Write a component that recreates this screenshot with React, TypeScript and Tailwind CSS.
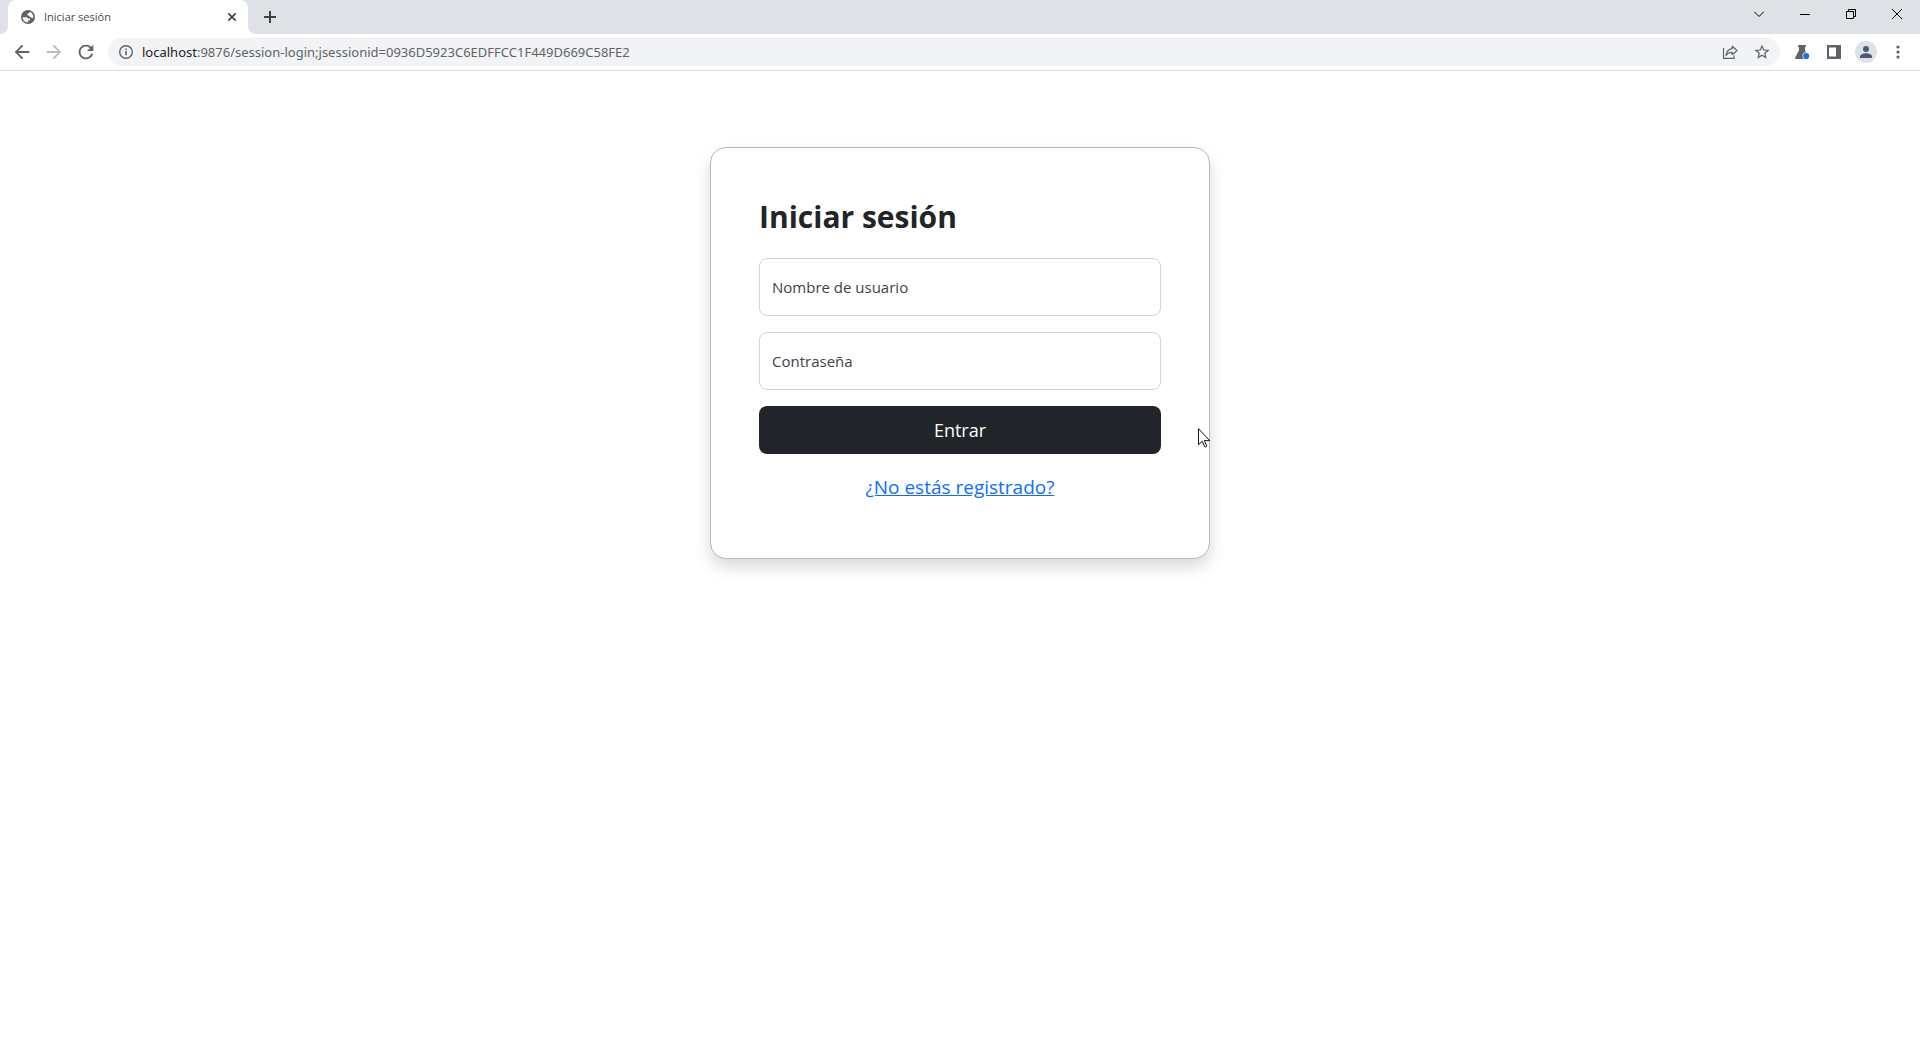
import type { ReactNode } from "react";

type IconButtonProps = { label: string; className?: string; children: ReactNode };

function IconButton({ label, className = "w-8", children }: IconButtonProps) {
  return (
    <button type="button" aria-label={label} className={`flex h-7 shrink-0 items-center justify-center ${className}`}>
      {children}
    </button>
  );
}

function TabStrip() {
  return (
    <header className="flex h-[34px] items-stretch bg-[#dee1e6]">
      <svg className="h-2 w-2 self-end" viewBox="0 0 8 8" aria-hidden="true">
        <path d="M8 0v8H0a8 8 0 0 0 8-8z" fill="#fff" />
      </svg>
      <div className="flex w-60 items-center rounded-t-lg bg-white pl-[13px] pr-2">
        <svg className="h-[14px] w-[14px] shrink-0" viewBox="0 0 14 14" aria-hidden="true">
          <circle cx="7" cy="7" r="7" fill="#5f6368" />
          <path
            d="M1.600 7.200h3.200c1 0 1.700.5 2 1.400h1.400c.7 0 .9.5.7 1.100-.2.7-.8.9-1.600.9-.4 0-.5.4-.5 1.800C4 12.400 1.700 10.200 1.600 7.200z"
            fill="#fff"
          />
          <path
            d="M8.700 1.800c.1.900-.3 1.300-1.100 1.400-.9.1-1.300.6-1.300 1.300s.5 1 1.300 1c.7 0 .9.700 1.200 1.200.4.600 1 .3 1.500.7.500.5.900 1 2 .600C12.800 5.400 11.300 2.700 8.700 1.800z"
            fill="#fff"
          />
        </svg>
        <span className="ml-[9px] grow font-['Open_Sans','Noto_Sans',sans-serif] text-[11px] text-[#45494d]">Iniciar sesión</span>
        <button type="button" aria-label="Cerrar pestaña" className="flex h-4 w-4 items-center justify-center">
          <svg className="h-2 w-2" viewBox="0 0 8 8" stroke="#3c4043" strokeWidth="1.6" aria-hidden="true">
            <path d="M.3.3l7.400 7.400M7.700.3L.3 7.700" />
          </svg>
        </button>
      </div>
      <svg className="h-2 w-2 self-end" viewBox="0 0 8 8" aria-hidden="true">
        <path d="M0 0v8h8a8 8 0 0 1-8-8z" fill="#fff" />
      </svg>
      <button type="button" aria-label="Nueva pestaña" className="flex w-7 items-center justify-center">
        <svg className="h-3 w-3" viewBox="0 0 12 12" stroke="#3c4043" strokeWidth="2" aria-hidden="true">
          <path d="M6 0v12M0 6h12" />
        </svg>
      </button>
      <div className="ml-auto flex h-7 text-black">
        <IconButton label="Buscar pestañas" className="w-[46px]">
          <svg className="h-[10px] w-[10px]" viewBox="0 0 10 10" fill="none" stroke="currentColor" aria-hidden="true">
            <path d="M0 2.500l5 5 5-5" />
          </svg>
        </IconButton>
        <IconButton label="Minimizar" className="w-[46px]">
          <svg className="h-[10px] w-[10px]" viewBox="0 0 10 10" fill="none" stroke="currentColor" aria-hidden="true">
            <path d="M0 5.500h10" />
          </svg>
        </IconButton>
        <IconButton label="Restaurar" className="w-[46px]">
          <svg className="h-[10px] w-[10px]" viewBox="0 0 10 10" fill="none" stroke="currentColor" aria-hidden="true">
            <path d="M.5 2.500h7v7h-7zM2.500 2.500v-2h7v7h-2" />
          </svg>
        </IconButton>
        <IconButton label="Cerrar" className="w-[46px]">
          <svg className="h-[10px] w-[10px]" viewBox="0 0 10 10" fill="none" stroke="currentColor" aria-hidden="true">
            <path d="M0 0l10 10M10 0L0 10" />
          </svg>
        </IconButton>
      </div>
    </header>
  );
}

function Toolbar() {
  return (
    <nav aria-label="Navegador" className="flex h-[37px] items-center border-b border-[#dadce0] bg-white px-[6px] text-[#5f6368]">
      <IconButton label="Atrás">
        <svg className="h-[22px] w-[22px]" viewBox="0 0 24 24" fill="currentColor" aria-hidden="true">
          <path d="M20 11H7.830l5.590-5.590L12 4l-8 8 8 8 1.410-1.410L7.830 13H20v-2z" />
        </svg>
      </IconButton>
      <IconButton label="Adelante">
        <svg className="h-[22px] w-[22px] text-[#babcbe]" viewBox="0 0 24 24" fill="currentColor" aria-hidden="true">
          <path d="M12 4l-1.410 1.410L16.170 11H4v2h12.170l-5.580 5.590L12 20l8-8z" />
        </svg>
      </IconButton>
      <IconButton label="Recargar">
        <svg className="h-[22px] w-[22px]" viewBox="0 0 24 24" fill="currentColor" aria-hidden="true">
          <path d="M17.650 6.350C16.200 4.900 14.210 4 12 4c-4.420 0-7.990 3.580-7.990 8s3.570 8 7.990 8c3.730 0 6.840-2.550 7.730-6h-2.080c-.82 2.330-3.040 4-5.650 4-3.310 0-6-2.690-6-6s2.690-6 6-6c1.660 0 3.140.69 4.220 1.780L13 11h7V4l-2.350 2.350z" />
        </svg>
      </IconButton>
      <div className="ml-[6px] flex h-7 grow items-center rounded-full bg-[#f1f3f4] pl-[10px] pr-[2px]">
        <svg className="h-4 w-4 shrink-0" viewBox="0 0 16 16" fill="none" stroke="currentColor" strokeWidth="1.400" aria-hidden="true">
          <circle cx="8" cy="8" r="6.300" />
          <path d="M8 7v4.300M8 4.500V6" strokeWidth="1.600" />
        </svg>
        <a href="#inicio" className="ml-2 grow whitespace-nowrap font-['Noto_Sans','Open_Sans',sans-serif] text-[13px] leading-5">
          <span className="text-[#202124]">localhost</span>:9876/session-login;jsessionid=0936D5923C6EDFFCC1F449D669C58FE2
        </a>
        <IconButton label="Compartir">
          <svg className="h-4 w-4" viewBox="0 0 16 16" fill="none" stroke="currentColor" strokeWidth="1.200" aria-hidden="true">
            <path d="M1.500 4v10.400h10.500V11.500" />
            <path d="M10.200 2.300L15 6.500l-4.800 4.200V8.300C7.300 8.200 5.300 9.200 4 11.500c.4-3.700 2.500-6.300 6.200-6.800z" strokeLinejoin="round" />
          </svg>
        </IconButton>
        <IconButton label="Añadir a marcadores">
          <svg className="h-4 w-4" viewBox="1.500 1.500 21 21" fill="currentColor" aria-hidden="true">
            <path d="M22 9.240l-7.190-.62L12 2 9.190 8.630 2 9.240l5.460 4.730L5.820 21 12 17.270 18.180 21l-1.630-7.030L22 9.240zM12 15.400l-3.760 2.270 1-4.280-3.320-2.880 4.380-.38L12 6.100l1.710 4.040 4.380.38-3.320 2.880 1 4.280L12 15.400z" />
          </svg>
        </IconButton>
      </div>
      <IconButton label="Experimentos" className="ml-[6px] w-8">
        <svg className="h-4 w-4" viewBox="0 0 16 16" aria-hidden="true">
          <path d="M4 1h8v1.700h-1v3.600l3.800 7.200c.4.800 0 1.500-.9 1.500H2.100c-.9 0-1.300-.7-.9-1.500L5 6.300V2.700H4z" fill="#5f6368" />
          <circle cx="12.200" cy="12" r="3.700" fill="#fff" />
          <circle cx="12.200" cy="12" r="3.100" fill="#1a73e8" />
        </svg>
      </IconButton>
      <IconButton label="Panel lateral">
        <svg className="h-[14px] w-[14px]" viewBox="0 0 14 14" aria-hidden="true">
          <path fillRule="evenodd" d="M0 0h14v14H0zM2 2.500v9h7v-9z" fill="currentColor" />
        </svg>
      </IconButton>
      <IconButton label="Perfil">
        <svg className="h-[22px] w-[22px]" viewBox="0 0 22 22" aria-hidden="true">
          <circle cx="11" cy="11" r="11" fill="#dee1e6" />
          <circle cx="11" cy="8" r="3" fill="#4d5b70" />
          <path d="M5 17v-1.500c0-2 4-3.200 6-3.200s6 1.200 6 3.200V17z" fill="#4d5b70" />
        </svg>
      </IconButton>
      <IconButton label="Menú">
        <svg className="h-[14px] w-[14px]" viewBox="0 0 14 14" fill="currentColor" aria-hidden="true">
          <circle cx="7" cy="2" r="1.600" />
          <circle cx="7" cy="7" r="1.600" />
          <circle cx="7" cy="12" r="1.600" />
        </svg>
      </IconButton>
    </nav>
  );
}

type FieldProps = { id: string; type: string; label: string };

function Field({ id, type, label }: FieldProps) {
  return (
    <div className="relative mb-4">
      <input
        id={id}
        type={type}
        placeholder=" "
        className="peer block h-[58px] w-full rounded-lg border border-[#ced4da] bg-white px-3 pt-4 text-base text-[#212529] outline-none"
      />
      <label
        htmlFor={id}
        className="pointer-events-none absolute inset-y-0 left-[13px] flex items-center text-[15px] text-[#404448] peer-focus:items-start peer-focus:text-xs"
      >
        {label}
      </label>
    </div>
  );
}

export default function App() {
  return (
    <div className="min-h-screen bg-white">
      <TabStrip />
      <Toolbar />
      <main className="flex justify-center px-4 pt-[76px] font-['Open_Sans','Noto_Sans',sans-serif]">
        <section className="relative w-full max-w-[500px] rounded-2xl border border-[#b8b8b8] bg-white px-12 pb-14 pt-12 shadow-[0_8px_16px_rgba(0,0,0,0.15)]">
          <h1 className="mb-5 text-[30px] font-bold leading-[42px] text-[#212529]">Iniciar sesión</h1>
          <form>
            <Field id="usuario" type="text" label="Nombre de usuario" />
            <Field id="clave" type="password" label="Contraseña" />
            <button type="submit" className="h-12 w-full rounded-lg bg-[#212529] text-lg font-medium text-white">
              Entrar
            </button>
          </form>
          <p className="mt-[18px] text-center text-[19px] leading-[30px]">
            <a href="#registro" className="text-[#0d6efd] underline">¿No estás registrado?</a>
          </p>
          <svg className="absolute right-[-2px] top-[280px] h-[21px] w-[13px]" viewBox="0 0 13 21" aria-hidden="true">
            <path d="M.5.7v16l3.700-3.500 2.600 5.600c.8.400 1.700 0 2-.8l-2.500-5.400h5.400z" fill="#fff" stroke="#111" strokeWidth="1" />
          </svg>
        </section>
      </main>
    </div>
  );
}
